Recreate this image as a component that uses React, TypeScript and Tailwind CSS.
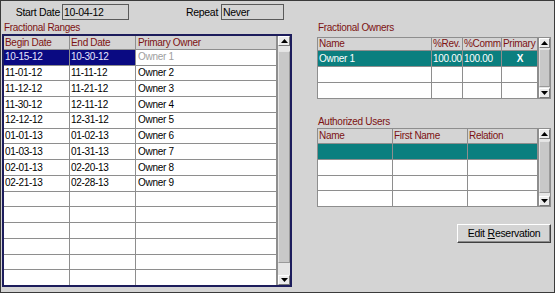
import React from "react";

const LINE = "border-[#8e8e8e]";

function Arrow({ dir }: { dir: "up" | "down" }) {
  return (
    <div className="h-[10px] shrink-0 flex items-center justify-center bg-[#ececec] border border-t-white border-l-white border-b-[#7a7a7a] border-r-[#7a7a7a]">
      <svg width="7" height="4" viewBox="0 0 7 4">
        <path d={dir === "up" ? "M3.5 0L7 4H0Z" : "M0 0H7L3.5 4Z"} fill="#000" />
      </svg>
    </div>
  );
}

function ScrollBar({ pt, pb, w }: { pt: string; pb: string; w: string }) {
  return (
    <div className={`${w} shrink-0 flex flex-col bg-[#e6e6e6] border-l ${LINE}`}>
      <Arrow dir="up" />
      <div className={`flex-1 flex flex-col ${pt} ${pb}`}>
        <div className="flex-1 bg-[#c8c8c8] border-l border-t border-l-[#e4e4e4] border-t-[#e4e4e4] border-r border-b border-r-[#9a9a9a] border-b-[#9a9a9a]" />
      </div>
      <Arrow dir="down" />
    </div>
  );
}

type Cell = { text?: string; cls?: string };

function Row({
  widths,
  cells,
  rowCls,
  last,
  h,
}: {
  widths: string[];
  cells: Cell[];
  rowCls?: string;
  last?: boolean;
  h?: string;
}) {
  return (
    <div className={`flex ${h ?? "flex-1"} min-h-0 ${last ? "" : `border-b ${LINE}`} ${rowCls ?? ""}`}>
      {widths.map((w, i) => (
        <div
          key={i}
          className={`${w} shrink-0 flex items-center pl-[1px] overflow-hidden whitespace-nowrap border-r ${LINE} ${cells[i]?.cls ?? ""}`}
        >
          {cells[i]?.text ?? ""}
        </div>
      ))}
    </div>
  );
}

const leftW = ["w-[66px]", "w-[66px]", "w-[141px]"];
const leftData: [string, string, string][] = [
  ["11-01-12", "11-11-12", "Owner 2"],
  ["11-12-12", "11-21-12", "Owner 3"],
  ["11-30-12", "12-11-12", "Owner 4"],
  ["12-12-12", "12-31-12", "Owner 5"],
  ["01-01-13", "01-02-13", "Owner 6"],
  ["01-03-13", "01-31-13", "Owner 7"],
  ["02-01-13", "02-20-13", "Owner 8"],
  ["02-21-13", "02-28-13", "Owner 9"],
];

const head = "text-[#7d1212]";

export default function App() {
  return (
    <div className="w-[555px] h-[293px] bg-[#d4d4d4] border border-[#3a3a3a] flex font-['Liberation_Sans',Arial,sans-serif] text-[10px] tracking-[-0.3px] leading-none text-black overflow-hidden">
      {/* Left column */}
      <div className="ml-[1px] w-[290px] flex flex-col">
        <div className="mt-[3px] h-[16px] flex items-center">
          <span className="w-[58px] text-right text-[10.5px]">Start Date</span>
          <div className="ml-[2px] w-[67px] h-[16px] border border-[#5a5a5a] flex items-center pl-[1px] text-[10.5px]">
            10-04-12
          </div>
          <span className="w-[89px] text-right text-[10.5px]">Repeat</span>
          <div className="ml-[3px] w-[63px] h-[16px] border border-[#5a5a5a] flex items-center pl-[1px] text-[10.5px]">
            Never
          </div>
        </div>
        <div className={`h-[14px] pt-[2px] pl-[2px] leading-[12px] ${head}`}>Fractional Ranges</div>
        <div className="h-[253px] border-2 border-[#1d1d5c] flex bg-white">
          <div className="flex-1 flex flex-col">
            <Row
              h="h-[14px]"
              widths={leftW}
              rowCls="bg-[#d4d4d4]"
              cells={[
                { text: "Begin Date", cls: head },
                { text: "End Date", cls: head },
                { text: "Primary Owner", cls: `${head} pl-[2px]` },
              ]}
            />
            <div className="flex-1 flex flex-col">
              <Row
                widths={leftW}
                cells={[
                  { text: "10-15-12", cls: "bg-[#0a0a82] text-[#e6e6ff]" },
                  { text: "10-30-12", cls: "bg-[#0a0a82] text-[#e6e6ff]" },
                  { text: "Owner 1", cls: "text-[#9e9e9e] pl-[2px]" },
                ]}
              />
              {leftData.map((r, i) => (
                <Row
                  key={i}
                  widths={leftW}
                  cells={[{ text: r[0] }, { text: r[1] }, { text: r[2], cls: "pl-[2px]" }]}
                />
              ))}
              {[0, 1, 2, 3, 4, 5].map((i) => (
                <Row key={"e" + i} widths={leftW} cells={[]} last={i === 5} />
              ))}
            </div>
          </div>
          <ScrollBar w="w-[13px]" pt="pt-[5px]" pb="pb-[12px]" />
        </div>
      </div>

      {/* Right column */}
      <div className="ml-[25px] w-[234px] flex flex-col">
        <div className={`mt-[21px] h-[15px] pl-[1px] leading-[12px] ${head}`}>Fractional Owners</div>
        <div className={`h-[62px] border ${LINE} flex bg-white`}>
          <div className="flex-1 flex flex-col">
            <Row
              h="h-[13px]"
              widths={["w-[114px]", "w-[31px]", "w-[39px]", "w-[36px]"]}
              rowCls="bg-[#d4d4d4]"
              cells={[
                { text: "Name", cls: head },
                { text: "%Rev.", cls: head },
                { text: "%Comm", cls: head },
                { text: "Primary", cls: head },
              ]}
            />
            <div className="flex-1 flex flex-col">
              <Row
                widths={["w-[114px]", "w-[31px]", "w-[39px]", "w-[36px]"]}
                rowCls="bg-[#0b7f7f] text-white"
                cells={[
                  { text: "Owner 1" },
                  { text: "100.00" },
                  { text: "100.00" },
                  { text: "X", cls: "justify-center font-bold pl-0" },
                ]}
              />
              <Row widths={["w-[114px]", "w-[31px]", "w-[39px]", "w-[36px]"]} cells={[]} />
              <Row widths={["w-[114px]", "w-[31px]", "w-[39px]", "w-[36px]"]} cells={[]} last />
            </div>
          </div>
          <ScrollBar w="w-[12px]" pt="pt-[1px]" pb="pb-[1px]" />
        </div>

        <div className={`mt-[16px] h-[13px] pt-[1px] pl-[1px] leading-[12px] ${head}`}>Authorized Users</div>
        <div className={`h-[79px] border ${LINE} flex bg-white`}>
          <div className="flex-1 flex flex-col">
            <Row
              h="h-[15px]"
              widths={["w-[75px]", "w-[75px]", "w-[70px]"]}
              rowCls="bg-[#d4d4d4]"
              cells={[
                { text: "Name", cls: head },
                { text: "First Name", cls: head },
                { text: "Relation", cls: head },
              ]}
            />
            <div className="flex-1 flex flex-col">
              <Row widths={["w-[75px]", "w-[75px]", "w-[70px]"]} rowCls="bg-[#0b7f7f]" cells={[]} />
              <Row widths={["w-[75px]", "w-[75px]", "w-[70px]"]} cells={[]} />
              <Row widths={["w-[75px]", "w-[75px]", "w-[70px]"]} cells={[]} />
              <Row widths={["w-[75px]", "w-[75px]", "w-[70px]"]} cells={[]} last />
            </div>
          </div>
          <ScrollBar w="w-[12px]" pt="pt-[2px]" pb="pb-[3px]" />
        </div>

        <button className="mt-[17px] self-end w-[94px] h-[19px] bg-[#d4d4d4] border border-t-white border-l-white border-b-[#404040] border-r-[#404040] shadow-[inset_-1px_-1px_0_#8a8a8a] flex items-center justify-center text-[10.5px] text-black">
          Edit <span className="underline ml-[3px]">R</span>eservation
        </button>
      </div>
    </div>
  );
}
